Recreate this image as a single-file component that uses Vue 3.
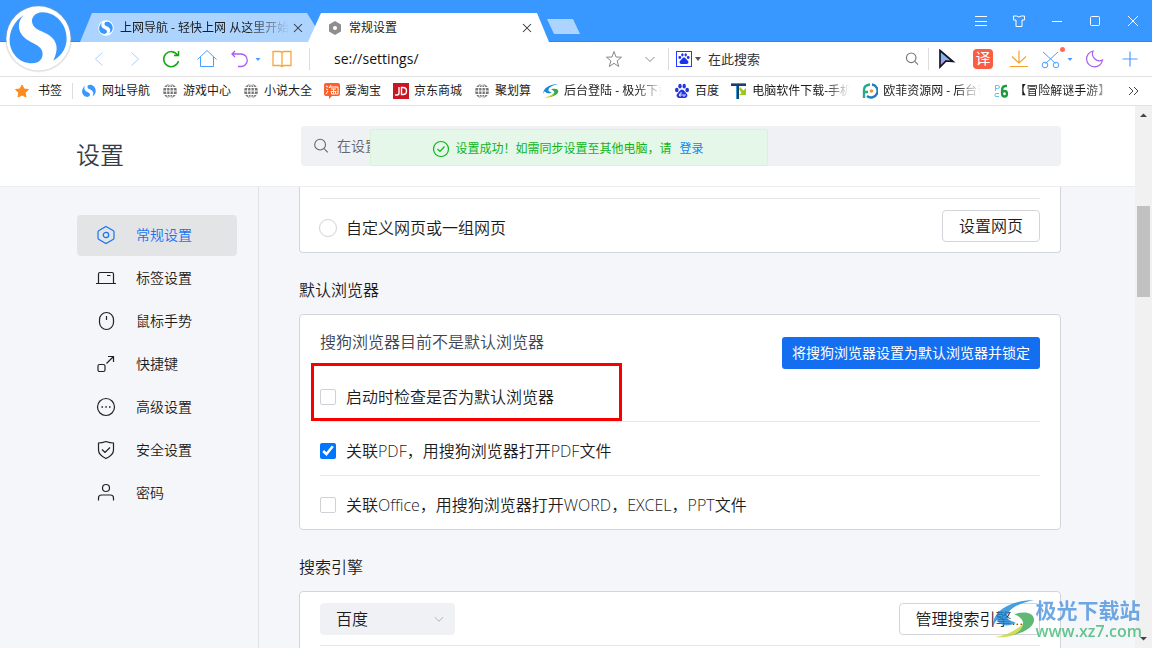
<script setup>
import { ref } from 'vue'

const windowButtons = [
  { icon: 'menu', label: '菜单' },
  { icon: 'shirt', label: '皮肤' },
  { icon: 'min', label: '最小化' },
  { icon: 'max', label: '最大化' },
  { icon: 'close', label: '关闭' }
]

const bookmarks = [
  { icon: 'logo', text: '网址导航' },
  { icon: 'globe', text: '游戏中心' },
  { icon: 'globe', text: '小说大全' },
  { icon: 'tao', text: '爱淘宝' },
  { icon: 'jd', text: '京东商城' },
  { icon: 'globe', text: '聚划算' },
  { icon: 'aurora', text: '后台登陆 - 极光下载', fade: true },
  { icon: 'paw', text: '百度' },
  { icon: 'tdown', text: '电脑软件下载-手机', fade: true },
  { icon: 'oufei', text: '欧菲资源网 - 后台管', fade: true },
  { icon: 'pc6', text: '【冒险解谜手游】手', fade: true }
]

const menu = [
  { icon: 'hex', text: '常规设置', active: true },
  { icon: 'tab', text: '标签设置' },
  { icon: 'mouse', text: '鼠标手势' },
  { icon: 'keys', text: '快捷键' },
  { icon: 'more', text: '高级设置' },
  { icon: 'shield', text: '安全设置' },
  { icon: 'user', text: '密码' }
]

const url = ref('se://settings/')
const customPage = ref(false)
const checkOnStart = ref(false)
const openPdf = ref(true)
const openOffice = ref(false)
</script>

<template>
  <div class="browser">
    <svg class="defs" aria-hidden="true">
      <symbol id="i-logo" viewBox="16 16 200 200">
        <circle cx="116" cy="116" r="96" fill="#fff" />
        <path fill="#3898ff" d="M72 46C42 66 28 96 30 128c4 36 32 62 66 62 24 0 34-14 32-32-2-18-22-24-42-36C52 102 50 68 72 46Z" />
        <path fill="#3898ff" d="M128 38c-22 0-36 16-30 34 6 18 30 22 50 34 26 18 28 44 12 76 28-16 40-40 40-66 0-44-34-78-72-78Z" />
      </symbol>
      <symbol id="i-globe" viewBox="0 0 16 16">
        <circle cx="8" cy="8" r="7" fill="#777" />
        <g fill="none" stroke="#fff" stroke-width="1"><ellipse cx="8" cy="8" rx="3.500" ry="7" /><path d="M8 1v14M1 8h14M2 4.500h12M2 11.500h12" /></g>
      </symbol>
      <symbol id="i-tao" viewBox="0 0 16 16">
        <path fill="#f9622c" d="M2 0h12q2 0 2 2v9q0 2-2 2H8l-3 3v-3H2q-2 0-2-2V2q0-2 2-2Z" />
        <path d="M2 3l2 1M2 6l2 1M2 11l2-3M7 2L5 5M6 4h8v7h-2M7 6h5M6.500 8.500h6M9.500 6v5M7.500 9v2h4V9" stroke="#fff" fill="none" />
      </symbol>
      <symbol id="i-jd" viewBox="0 0 16 16">
        <rect width="16" height="16" fill="#c81623" />
        <path d="M6 4v6q0 2-2 2H2M8.500 4.500v7H10q3.500 0 3.500-3.500T10 4.500Z" fill="none" stroke="#fff" stroke-width="1.400" />
      </symbol>
      <symbol id="i-aurora" viewBox="0 0 44 40">
        <path fill="#1e88d8" d="M1 28C0 14 14 2 42 1 28 4 17 9 15 17c-1 4 5 5 9 7-8 4-16 3-19-3-2 2-3 4-4 7Z" />
        <path fill="#36a852" d="M22 15c12-3 19-1 20 5 1 8-12 16-28 17 10-4 18-9 17-14-1-4-5-6-9-8Z" />
        <path fill="#c7d62e" d="M3 38c9-1 19-5 28-13-1 8-12 15-28 13Z" />
      </symbol>
      <symbol id="i-paw" viewBox="0 0 16 16">
        <g fill="#2436dc"><ellipse cx="2.800" cy="7" rx="1.800" ry="2.300" /><ellipse cx="6" cy="3.200" rx="1.700" ry="2.400" /><ellipse cx="10.200" cy="3.200" rx="1.700" ry="2.400" /><ellipse cx="13.200" cy="7" rx="1.800" ry="2.300" /><path d="M8 6.500c2 0 3 2.500 4.500 4 2 2 .500 4.500-2 4.500h-5c-2.500 0-4-2.500-2-4.500C5 9 6 6.500 8 6.500Z" /></g>
        <path d="M7 9v4H5.500v-2H7M9 11v2h2v-2" fill="none" stroke="#fff" stroke-width=".8" />
      </symbol>
      <symbol id="i-tdown" viewBox="0 0 16 16">
        <path fill="#17406f" d="M0 0h15v3H8v13H5V3H0Z" />
        <path fill="#3a9bd0" d="M0 0h15v1H0ZM5 3h1v13H5Z" />
        <path fill="#9ac81c" d="M9 4l3.500 3.500L15 5v7H8l2.500-2L8 6Z" />
      </symbol>
      <symbol id="i-oufei" viewBox="0 0 16 16">
        <path fill="none" stroke="#27a98b" stroke-width="2.400" d="M2 15V7q0-5 6-5.500M2 9h4" />
        <path fill="none" stroke="#1b7fc0" stroke-width="2.400" d="M10 1.500a6.500 6.500 0 1 1-5 11.500" />
        <circle cx="9.500" cy="8" r="1.800" fill="#f2962b" />
      </symbol>
      <symbol id="i-pc6" viewBox="0 0 16 16">
        <path fill="none" stroke="#62bfe8" d="M2.500 8V2.500h2q2 0 2 1.500t-2 1.500h-2M6 10.500H3q-1 0-1 1v1q0 1 1 1h3" />
        <path fill="none" stroke="#1d9a3e" stroke-width="2.300" d="M14 3h-1.500Q9 3 9 8v2.500q0 3 2.500 3t2.500-2.800q0-2.700-2.500-2.700T9 10" />
      </symbol>
      <symbol id="i-menu" viewBox="0 0 20 20"><path d="M4 5.500h12M4 10.500h12M4 14.500h12" /></symbol>
      <symbol id="i-shirt" viewBox="0 0 20 20"><path d="M4.500 5h3q2.500 2 5 0h3v4H13v6.500H7V9H4.500Z" /></symbol>
      <symbol id="i-min" viewBox="0 0 20 20"><path d="M5 10.500h10" /></symbol>
      <symbol id="i-max" viewBox="0 0 20 20"><rect x="5.500" y="5.500" width="9" height="9" rx="1" /></symbol>
      <symbol id="i-close" viewBox="0 0 20 20"><path d="M5 5l10 10M15 5L5 15" /></symbol>
      <symbol id="i-hex" viewBox="0 0 20 20"><path d="M10 1.500l7 4q1 .5 1 1.500v6q0 1-1 1.500l-7 4-7-4q-1-.5-1-1.500V7q0-1 1-1.500Z" /><circle cx="10" cy="10" r="2.700" /></symbol>
      <symbol id="i-tab" viewBox="0 0 20 20"><path d="M0 15.500h20M2.500 15.500V6q0-1.500 1.500-1.500h12q1.500 0 1.500 1.500v9.500M11 7.500h3.500" /></symbol>
      <symbol id="i-mouse" viewBox="0 0 20 20"><rect x="3.500" y="1.500" width="14" height="17" rx="7" /><path d="M10.500 5v4" /></symbol>
      <symbol id="i-keys" viewBox="0 0 20 20"><rect x="2" y="10.500" width="7" height="7" rx="1.500" /><path d="M10.500 9.500l7-7M12 2.500h5.500V8" /></symbol>
      <symbol id="i-more" viewBox="0 0 20 20"><circle cx="10" cy="10" r="8.500" /><path d="M5.500 10h1.500M9.300 10h1.500M13 10h1.500" stroke-width="1.500" /></symbol>
      <symbol id="i-shield" viewBox="0 0 20 20"><path d="M10 1.500q4 1.500 7.500 1.500v7q0 5-7.500 8.500Q2.500 15 2.500 10V3Q6 3 10 1.500ZM6 9.500l3 3 5-5" /></symbol>
      <symbol id="i-user" viewBox="0 0 20 20"><circle cx="10" cy="5" r="3.500" /><path d="M2.500 17.500V15q0-3 3-3h9q3 0 3 3v2.500" /></symbol>
      <symbol id="i-search" viewBox="0 0 20 20"><circle cx="9" cy="8.500" r="6" /><path d="M13.500 13l4 4" /></symbol>
      <symbol id="i-down" viewBox="0 0 20 20"><path d="M5.500 8l4.500 4.500L14.500 8" /></symbol>
    </svg>

    <header class="titlebar">
      <nav class="tabs">
        <a class="tab" href="#nav">
          <svg class="tab-icon"><use href="#i-logo" /></svg>
          <span class="tab-text fade">上网导航 - 轻快上网 从这里开始</span>
          <svg class="tab-close"><use href="#i-close" /></svg>
        </a>
        <a class="tab current" href="#settings">
          <svg class="tab-icon" viewBox="0 0 16 16"><path fill="#8e8e8e" d="M8 1l6 3.500v7L8 15l-6-3.500v-7Z" /><circle cx="8" cy="8" r="2" fill="#fff" /></svg>
          <span class="tab-text">常规设置</span>
          <svg class="tab-close"><use href="#i-close" /></svg>
        </a>
      </nav>
      <button class="new-tab" aria-label="新标签"></button>
      <div class="window-buttons">
        <button v-for="b in windowButtons" :key="b.icon" :aria-label="b.label"><svg><use :href="'#i-' + b.icon" /></svg></button>
      </div>
    </header>

    <svg class="brand" aria-label="搜狗浏览器"><use href="#i-logo" /></svg>

    <div class="toolbar">
      <button class="tool" aria-label="后退"><svg viewBox="0 0 20 20" stroke="#a8d0ff"><path d="M13.500 3.500L6.500 10l7 6.500" /></svg></button>
      <button class="tool" aria-label="前进"><svg viewBox="0 0 20 20" stroke="#a8d0ff"><path d="M6.500 3.500l7 6.500-7 6.500" /></svg></button>
      <button class="tool" aria-label="刷新"><svg viewBox="0 0 20 20" stroke="#12a812" stroke-width="1.500"><path d="M16.500 6A7.500 7.500 0 1 0 17.500 12M17.500 2v4.500H13" /></svg></button>
      <button class="tool" aria-label="主页"><svg viewBox="0 0 20 20" stroke="#4a9dff"><path d="M.5 10.500L10 1.500l9.500 9M3.500 8v9.500h13V8" /></svg></button>
      <button class="tool short" aria-label="撤销"><svg viewBox="0 0 20 20" stroke="#a95cf0" stroke-width="1.300"><path d="M6 2L3 5l3 3M3 5h9a6 6 0 0 1 0 12.500H9" /></svg></button>
      <button class="tool caret" aria-label="更多撤销"><svg viewBox="6 5 8 8"><path fill="#4a9dff" d="M7.500 8h5L10 11Z" /></svg></button>
      <button class="tool book" aria-label="阅读"><svg viewBox="0 0 20 20" stroke="#f7a63a" stroke-width="1.300"><path d="M10 3.500q-1-1-2.500-1H1v14h6.500q1.500 0 2.500 1 1-1 2.500-1H19v-14h-6.500q-1.500 0-2.500 1v14" /></svg></button>
      <i class="divider"></i>
      <input v-model="url" class="address" type="text" aria-label="地址">
      <button class="tool" aria-label="收藏"><svg viewBox="0 0 20 20" stroke="#888"><path d="M10 2.500l2 5.500 5.500.2-4.300 3.600 1.500 5.700-4.700-3.200-4.700 3.200 1.500-5.700L2.500 8.200 8 8Z" /></svg></button>
      <button class="tool" aria-label="展开地址"><svg stroke="#888"><use href="#i-down" /></svg></button>
      <i class="divider"></i>
      <div class="search">
        <svg class="engine" viewBox="0 0 16 16"><rect x=".5" y=".5" width="15" height="15" fill="#fff" stroke="#2436ff" /><g fill="#1c32ee"><circle cx="3.800" cy="6.500" r="1.400" /><ellipse cx="6.400" cy="3.800" rx="1.200" ry="1.600" /><ellipse cx="9.700" cy="3.800" rx="1.200" ry="1.600" /><circle cx="12.200" cy="6.500" r="1.400" /><path d="M8 6.500c1.500 0 2.500 2 3.800 3.200 1.400 1.500.4 3.300-1.800 3.300H6c-2.200 0-3.200-1.800-1.800-3.300C5.500 8.500 6.500 6.500 8 6.500Z" /></g></svg>
        <svg class="engine-caret" viewBox="0 0 6 4"><path fill="#555" d="M0 0h6L3 4Z" /></svg>
        <input type="text" placeholder="在此搜索" aria-label="搜索">
        <button class="tool" aria-label="搜索"><svg class="small" stroke="#777" stroke-width="1.400"><use href="#i-search" /></svg></button>
      </div>
      <i class="divider"></i>
      <button class="tool" aria-label="手势"><svg viewBox="0 0 20 20"><path fill="#79b9ee" stroke="#151525" stroke-width="1.700" d="M3 1.500l13 11-7-.5-6 6Z" /><path fill="#c695ea" d="M6 9l6 2.200-3.500-.2L4 15Z" /></svg></button>
      <button class="tool" aria-label="翻译"><span class="translate">译</span></button>
      <button class="tool" aria-label="下载"><svg viewBox="0 0 20 20" stroke="#f7a12f" stroke-width="1.200"><path d="M10 1.500V14M3 7.500l7 6.500 7-6.500M1 17.500h18" /></svg></button>
      <button class="tool short" aria-label="截图"><svg viewBox="0 0 20 20" stroke="#4a9dff"><path d="M2 3l12.500 11.500M17 3L4.500 14.500" /><circle cx="4" cy="16" r="2.800" /><circle cx="15" cy="16" r="2.800" /></svg><i class="dot"></i></button>
      <button class="tool caret" aria-label="更多截图"><svg viewBox="6 5 8 8"><path fill="#4a9dff" d="M7.500 8h5L10 11Z" /></svg></button>
      <button class="tool book" aria-label="夜间模式"><svg viewBox="0 0 20 20" stroke="#a95cf0" stroke-width="1.200"><path d="M9 2A8 8 0 1 0 18.500 11 7 7 0 0 1 9 2Z" /></svg></button>
      <button class="tool plus" aria-label="添加"><svg viewBox="0 0 20 20" stroke="#4a9dff" stroke-width="1.200"><path d="M10 2.500v15M2.500 10h15" /></svg></button>
    </div>

    <nav class="bookmarks">
      <a class="mark" href="#bookmarks"><svg viewBox="0 0 16 16"><path fill="#ff8a1c" stroke="#ff8a1c" stroke-linejoin="round" d="M8 2l2 4 4.500.5-3.300 3 .8 4.500-4-2-4 2 .8-4.500-3.300-3L6 6Z" /></svg><span class="mark-first">书签</span></a>
      <i class="divider"></i>
      <a v-for="m in bookmarks" :key="m.text" class="mark" href="#site">
        <svg><use :href="'#i-' + m.icon" /></svg><span :class="{ fade: m.fade }">{{ m.text }}</span>
      </a>
      <button class="overflow" aria-label="更多书签"><svg viewBox="0 0 12 12"><path d="M2 2l4 4-4 4M7 2l4 4-4 4" /></svg></button>
    </nav>

    <div class="viewport">
      <div class="page">
        <div class="page-head">
          <h1>设置</h1>
          <label class="find"><svg><use href="#i-search" /></svg><input type="text" placeholder="在设置中搜索" aria-label="在设置中搜索"></label>
          <div class="toast" role="status">
            <svg viewBox="0 0 18 18"><circle cx="9" cy="9" r="7.500" /><path d="M5.500 9L8 11.500l4.500-5" /></svg>
            <span>设置成功！如需同步设置至其他电脑，请</span><a href="#login">登录</a>
          </div>
        </div>

        <div class="body">
          <nav class="side">
            <a v-for="m in menu" :key="m.text" href="#menu" :class="{ active: m.active }">
              <svg><use :href="'#i-' + m.icon" /></svg>{{ m.text }}
            </a>
          </nav>

          <main class="main">
            <section class="card continued">
              <div class="row">
                <label class="option"><input v-model="customPage" type="radio" :value="true">自定义网页或一组网页</label>
                <button class="plain">设置网页</button>
              </div>
            </section>

            <h2>默认浏览器</h2>
            <section class="card">
              <div class="row default-row">
                <div>
                  <p>搜狗浏览器目前不是默认浏览器</p>
                  <div class="marked">
                    <label class="option"><input v-model="checkOnStart" type="checkbox">启动时检查是否为默认浏览器</label>
                  </div>
                </div>
                <button class="primary">将搜狗浏览器设置为默认浏览器并锁定</button>
              </div>
              <div class="row"><label class="option"><input v-model="openPdf" type="checkbox">关联PDF，用搜狗浏览器打开PDF文件</label></div>
              <div class="row"><label class="option"><input v-model="openOffice" type="checkbox">关联Office，用搜狗浏览器打开WORD，EXCEL，PPT文件</label></div>
            </section>

            <h2>搜索引擎</h2>
            <section class="card">
              <div class="row">
                <div class="picker"><select aria-label="搜索引擎"><option>百度</option></select><svg><use href="#i-down" /></svg></div>
                <button class="plain">管理搜索引擎...</button>
              </div>
              <div class="row"></div>
            </section>
          </main>
        </div>
      </div>
      <div class="scrollbar" aria-hidden="true">
        <svg viewBox="0 0 17 17"><path d="M5 11h7L8.500 7.500Z" /></svg>
        <div class="track"><div class="thumb"></div></div>
        <svg viewBox="0 0 17 17"><path d="M5 6h7L8.500 9.500Z" /></svg>
      </div>
    </div>

    <div class="watermark">
      <svg><use href="#i-aurora" /></svg>
      <div><b>极光下载站</b><span>www.xz7.com</span></div>
    </div>
  </div>
</template>

<style>
body { margin: 0; }
</style>

<style scoped>
* { box-sizing: border-box; }
.browser {
  position: relative;
  display: flex;
  flex-direction: column;
  height: 100vh;
  overflow: hidden;
  background: #fff;
  color: #1c1c1c;
  font: 350 12px/20px "Open Sans", "Noto Sans CJK SC", sans-serif;
}
.defs { position: absolute; width: 0; height: 0; }
svg { flex: none; fill: none; }
a { color: inherit; text-decoration: none; }
button { padding: 0; border: 0; background: none; color: inherit; font: inherit; }
input, select { min-width: 0; border: 0; outline: 0; background: none; color: inherit; font: inherit; padding: 0; margin: 0; }
.divider { flex: none; width: 1px; height: 22px; background: #dcdcdc; }
.fade { mask-image: linear-gradient(to right, #000 75%, transparent); }

.titlebar {
  display: flex;
  align-items: flex-end;
  height: 42px;
  flex: none;
  padding-left: 80px;
  background: #3898ff;
  box-shadow: inset 0 -1px #2f86e6;
}
.tabs { display: flex; }
.tab {
  display: flex;
  align-items: center;
  width: 236px;
  height: 29px;
  padding: 0 10px 0 18px;
  background: #acd4ff;
  clip-path: polygon(12px 0, 227px 0, 100% 50%, 229px 100%, 0 100%);
}
.tab.current {
  width: 241px;
  margin-left: -8px;
  padding-left: 19px;
  background: #fff;
  clip-path: polygon(13px 0, 229px 0, 100% 100%, 0 100%);
}
.tab-icon { width: 16px; height: 16px; margin-right: 6px; }
.tab-text { flex: 1; width: 0; overflow: hidden; white-space: nowrap; font-weight: 400; }
.tab-close { width: 16px; height: 16px; stroke: #333; stroke-width: 1.3; }
.current .tab-close { margin-right: 4px; }
.new-tab { width: 33px; height: 15px; margin: 0 0 8px -2px; background: #acd4ff; clip-path: polygon(0 0, 26px 0, 100% 100%, 7px 100%); }
.window-buttons { display: flex; margin-left: auto; height: 42px; }
.window-buttons button { display: grid; place-items: center; width: 38px; }
.window-buttons svg { width: 20px; height: 20px; stroke: #fff; }
.brand { position: absolute; top: 5px; left: 5px; width: 67px; height: 67px; filter: drop-shadow(0 0 1px #999); z-index: 2; }

.toolbar {
  display: flex;
  align-items: center;
  height: 35px;
  flex: none;
  padding: 0 6px 0 81px;
  border-bottom: 1px solid #e2e2e2;
}
.tool { position: relative; display: grid; place-items: center; flex: none; width: 36px; height: 34px; }
.tool svg { width: 20px; height: 20px; }
.tool .small { width: 16px; height: 16px; }
.tool.short { width: 28px; }
.tool.caret { width: 9px; }
.tool.caret svg { width: 8px; height: 8px; }
.tool.book { width: 40px; }
.tool.plus { width: 32px; }
.tool.book + .divider { margin-left: 7px; }
.address { flex: 1; padding-left: 24px; font-size: 14px; font-weight: 400; color: #111; }
.translate { width: 20px; height: 20px; border-radius: 4px; background: #fc5c42; color: #fff; font-size: 15px; line-height: 19px; font-weight: 400; }
.dot { position: absolute; top: 5px; right: 0; width: 5px; height: 5px; border-radius: 50%; background: #ff6b57; }
.search { display: flex; align-items: center; width: 259px; flex: none; padding-left: 7px; }
.engine { width: 16px; height: 16px; }
.engine-caret { width: 6px; height: 4px; margin: 0 7px 0 3px; }
.search input { flex: 1; font-size: 13px; font-weight: 400; }
.search input::placeholder { color: #333; opacity: 1; }
.search .tool { width: 32px; }

.bookmarks { display: flex; align-items: center; height: 29px; flex: none; padding-left: 14px; border-bottom: 1px solid #e2e2e2; white-space: nowrap; overflow: hidden; font-weight: 400; }
.bookmarks .divider { height: 16px; margin: 0 8px 0 -2px; }
.mark { display: flex; align-items: center; flex: none; margin-right: 12px; }
.mark svg { width: 16px; height: 16px; margin-right: 5px; }
.mark .mark-first { margin-left: 3px; }
.mark .fade { width: 98px; overflow: hidden; }
.overflow { margin-left: auto; padding-right: 13px; display: grid; }
.overflow svg { width: 12px; height: 12px; stroke: #444; }

.viewport { display: flex; flex: 1; min-height: 0; }
.page { display: flex; flex-direction: column; flex: 1; min-width: 0; }
.page-head { position: relative; display: flex; align-items: center; height: 81px; flex: none; padding: 0 74px 0 76px; border-bottom: 1px solid #ebecee; }
h1 { width: 225px; margin: 18px 0 0; color: #333d48; font-size: 24px; line-height: 32px; font-weight: 350; }
.find { display: flex; align-items: center; flex: 1; height: 40px; padding-left: 11px; border-radius: 4px; background: #f0f1f5; color: #666; }
.find svg { width: 18px; height: 18px; margin-right: 7px; stroke: #666; stroke-width: 1.2; }
.find input { flex: 1; font-size: 14px; }
.find input::placeholder { color: #666; opacity: 1; }
.toast { position: absolute; top: 23px; left: 370px; display: flex; align-items: center; justify-content: center; width: 398px; height: 37px; padding: 2px 2px 0 0; border: 1px solid #d9f3d8; border-radius: 2px; background: #e4f7e8; color: #0eb51c; font-weight: 400; white-space: nowrap; }
.toast svg { width: 18px; height: 18px; margin-right: 5px; stroke: #0eb51c; stroke-width: 1.2; }
.toast a { margin-left: 8px; color: #0b86f5; }

.body { display: flex; flex: 1; min-height: 0; overflow: hidden; background: #f5f6fa; }
.side { display: flex; flex-direction: column; gap: 2px; width: 259px; flex: none; padding: 28px 21px 0 77px; border-right: 1px solid #dfe1e5; }
.side a { display: flex; align-items: center; height: 41px; padding: 0 0 2px 19px; border-radius: 4px; font-size: 14px; }
.side svg { width: 20px; height: 20px; margin-right: 20px; stroke: #222; stroke-width: 1.2; }
.side .active { background: #e2e4e5; color: #1a73f0; }
.side .active svg { stroke: #1a73f0; }

.main { flex: 1; min-width: 0; padding: 0 74px 0 40px; font-size: 16px; line-height: 24px; }
h2 { height: 61px; margin: 0; padding-top: 25px; font-size: 16px; line-height: 24px; font-weight: 350; }
.card { padding: 0 20px; border: 1px solid #d3d5dc; border-radius: 4px; background: #fff; }
.continued { padding-top: 11px; border-top: 0; border-radius: 0 0 4px 4px; }
.row { display: flex; align-items: center; justify-content: space-between; min-height: 53px; }
.continued .row, .row + .row { border-top: 1px solid #e6e7ea; min-height: 54px; }
.option { display: flex; align-items: center; height: 53px; padding-top: 4px; }
.option input { width: 16px; height: 16px; margin-right: 10px; border: 1px solid #cfd1d6; border-radius: 2px; appearance: none; }
.option input[type="radio"] { width: 18px; height: 18px; margin: 0 9px 0 -1px; border-radius: 50%; }
.option input:checked { appearance: auto; }
.default-row { align-items: flex-start; }
p { height: 53px; margin: 0; padding-top: 15px; color: #3c4653; }
.marked { position: relative; }
.marked::after { content: ""; box-sizing: border-box; position: absolute; top: -5px; left: -9px; width: 311px; height: 58px; border: 3px solid #f80000; pointer-events: none; }
.plain { height: 32px; padding: 0 16px; border: 1px solid #d3d5da; border-radius: 4px; background: #fff; }
.primary { height: 32px; margin-top: 22px; padding: 0 10px; border-radius: 3px; background: #146ff0; color: #fff; font-size: 14px; font-weight: 400; }
.picker { position: relative; width: 135px; height: 32px; border-radius: 4px; background: #f0f1f5; }
.picker select { width: 100%; height: 32px; padding-left: 16px; appearance: none; }
.picker svg { position: absolute; top: 7px; right: 7px; width: 18px; height: 18px; stroke: #aaa; pointer-events: none; }

.scrollbar { display: flex; flex-direction: column; width: 17px; flex: none; background: #f1f1f1; }
.scrollbar svg { width: 17px; height: 17px; fill: #444; }
.track { flex: 1; padding: 83px 2px 0; }
.thumb { height: 91px; background: #c1c1c1; }

.watermark { position: absolute; right: 10px; bottom: 8px; display: flex; align-items: center; opacity: .8; pointer-events: none; }
.watermark svg { width: 44px; height: 40px; }
.watermark div { display: grid; }
.watermark b { color: #4c93dc; font-size: 21px; line-height: 24px; font-weight: 700; }
.watermark span { color: #3fb872; font-size: 16px; line-height: 18px; font-weight: 600; }
</style>
